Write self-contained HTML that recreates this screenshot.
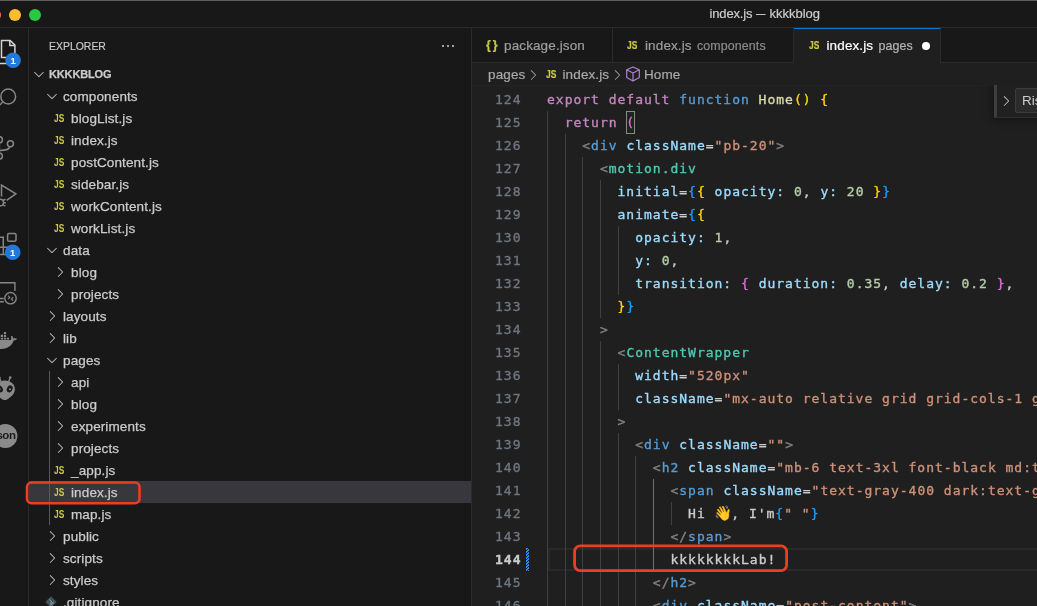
<!DOCTYPE html>
<html lang="en">
<head>
<meta charset="utf-8">
<title>index.js — kkkkblog</title>
<style>
*{box-sizing:border-box;margin:0;padding:0}
html,body{width:1037px;height:606px;overflow:hidden;background:#181818}
body{position:relative;will-change:transform;font-family:"Liberation Sans",sans-serif;color:#ccc;-webkit-font-smoothing:antialiased}
.abs{position:absolute}
/* window top edge */
#topedge{left:0;top:0;width:1037px;height:1px;background:#5d5d5d}
/* title bar */
#titlebar{left:0;top:0;width:1037px;height:28px;background:#181818;border-bottom:1px solid #2b2b2b}
#title{left:664px;top:6px;width:200px;height:16px;font-size:13px;line-height:16px;color:#cccccc;white-space:nowrap;letter-spacing:-0.15px;-webkit-text-stroke:0.2px currentColor}
.tl{width:12px;height:12px;border-radius:50%;top:9px}
/* activity bar */
#activity{left:0;top:28px;width:29px;height:578px;background:#181818;border-right:1px solid #2b2b2b;overflow:hidden}
/* sidebar */
#sidebar{left:29px;top:28px;width:443px;height:578px;background:#181818;border-right:1px solid #2b2b2b;overflow:hidden}
#exphead{left:20px;top:12px;font-size:11px;line-height:13px;color:#cccccc;white-space:nowrap;letter-spacing:0;transform:scaleX(0.95);transform-origin:0 0;-webkit-text-stroke:0.15px currentColor}
#dots{left:412px;top:16px}
.row{position:absolute;left:0;width:442px;height:22px;line-height:22px;font-size:13.5px;letter-spacing:0.12px;color:#cccccc;white-space:nowrap}
.row .lbl{position:absolute;top:1px;-webkit-text-stroke:0.25px currentColor}
.row .js{position:absolute;top:0.5px;font-size:10px;font-weight:bold;color:#cbcb41;letter-spacing:0;transform:scaleX(0.84);transform-origin:0 50%}
.row svg.chev{position:absolute;top:3px;width:16px;height:16px}
.row.sel{background:#37373d}
#root .lbl{font-size:11px;font-weight:bold;letter-spacing:-0.15px;top:0}
#guide{left:20px;top:343px;width:1px;height:154px;background:#585858}
.redbox{border:2.5px solid #ee4027;border-radius:5.5px;background:transparent}
/* editor */
#editor{left:472px;top:28px;width:565px;height:578px;background:#1f1f1f;overflow:hidden}
#tabs{left:0;top:0;width:565px;height:35px;background:#181818;border-bottom:1px solid #2b2b2b}
.tab{position:absolute;top:0;height:35px;border-right:1px solid #2b2b2b;font-size:13.5px;letter-spacing:0.12px;line-height:36px;color:#9d9d9d;white-space:nowrap}
.tab.active{background:#1f1f1f;border-top:1px solid #0078d4;color:#ffffff;height:36px;line-height:34px}
.tab span{position:absolute;top:0;-webkit-text-stroke:0.2px currentColor}
.tab .ic{font-weight:bold;color:#cbcb41}
.tab .desc{font-size:12.4px;color:#8b8b8b}
.jsi{font-size:10px;letter-spacing:0;transform:scaleX(0.84);transform-origin:0 50%}
.tab.active .desc{color:#b4b4b4}
#crumbs{left:0;top:36px;width:565px;height:22px;font-size:13.5px;letter-spacing:0.12px;line-height:22px;color:#a9a9a9;white-space:nowrap}
#crumbs span,#crumbs svg{position:absolute}
#crumbs span{-webkit-text-stroke:0.2px currentColor}
#code{left:0;top:59px;width:565px;height:520px;font-family:"DejaVu Sans Mono","Liberation Mono",monospace;font-size:13px;letter-spacing:0.99px;color:#cccccc;-webkit-text-stroke:0.35px currentColor}
.ln{position:absolute;left:0;height:23px;line-height:23px;white-space:pre;width:900px}
.ln .no{position:absolute;left:-0.5px;width:50px;text-align:right;color:#6e7681}
.ln .tx{position:absolute;left:75px}
.g{position:absolute;width:1px;background:#3a3a3a}
.emo{display:inline-block;width:16.7px;letter-spacing:0;font-size:14.5px;line-height:15px;text-align:center;vertical-align:-0.5px;-webkit-text-stroke:0;font-family:"Noto Color Emoji","DejaVu Sans",sans-serif}
.k{color:#c586c0}.b{color:#569cd6}.f{color:#dcdcaa}.y{color:#ffd700}.p{color:#da70d6}.u{color:#179fff}
.t{color:#808080}.c{color:#4ec9b0}.a{color:#9cdcfe}.s{color:#ce9178}.n{color:#b5cea8}.w{color:#cccccc}
</style>
</head>
<body>
<div id="titlebar" class="abs"></div>
<div id="topedge" class="abs"></div>
<div class="abs tl" style="left:-11px;background:#ff5f57"></div>
<div class="abs tl" style="left:9px;background:#febc2e"></div>
<div class="abs tl" style="left:29px;background:#28c840"></div>
<div id="title" class="abs"><span class="abs" style="left:45.5px;top:0">index.js</span><span class="abs" style="left:91.9px;top:0;transform:scaleX(0.72);transform-origin:0 50%">—</span><span class="abs" style="left:105.6px;top:0;letter-spacing:-0.02px">kkkkblog</span></div>

<div id="activity" class="abs">
<svg class="abs" style="left:0;top:0" width="29" height="578" viewBox="0 28 29 578" fill="none" stroke-linecap="butt" stroke-linejoin="miter">
<g stroke="#d4d4d4" stroke-width="1.5"><path d="M1.5 57.4V40.4H10.2L14.9 45.1V57.4Z"/><path d="M9.8 40.6V45.5H14.7"/><path d="M-5 46.4V63.4H9V57.4"/></g>
<circle cx="13.1" cy="60.2" r="7.8" fill="#2478d8"/>
<text x="13.1" y="63.6" text-anchor="middle" font-family="Liberation Sans, sans-serif" font-weight="bold" font-size="9.5" fill="#ffffff">1</text>
<g stroke="#868686" stroke-width="1.5"><circle cx="8.2" cy="96.5" r="7.4"/><path d="M3 101.8L-3 107.8"/></g>
<g stroke="#868686" stroke-width="1.5"><circle cx="10.4" cy="143.8" r="3"/><circle cx="-0.6" cy="139.8" r="3"/><circle cx="-0.6" cy="156.1" r="3"/><path d="M-0.6 142.8V153.1"/><path d="M9.8 146.7C9.2 150.2 4.8 150.4-0.6 150.4"/></g>
<g stroke="#868686" stroke-width="1.5"><path d="M1.5 196.5V185L15.9 193.9L6.6 200.4"/><circle cx="0.2" cy="202.6" r="3.3"/><path d="M3.2 200.5L5.4 199.2M3.5 202.8H5.8M3.2 204.9L5.4 206.2"/></g>
<g stroke="#868686" stroke-width="1.5"><rect x="7.6" y="233.4" width="8.4" height="7.8" rx="1.3"/><path d="M-3 237.3H3.3V254.5H-3M-3 247.3H8M3.3 254.5H8"/></g>
<circle cx="12.7" cy="252.2" r="7.8" fill="#2478d8"/>
<text x="12.7" y="255.6" text-anchor="middle" font-family="Liberation Sans, sans-serif" font-weight="bold" font-size="9.5" fill="#ffffff">1</text>
<g stroke="#868686" stroke-width="1.4"><path d="M-3 282.7H14.9V291"/><circle cx="10.5" cy="298.2" r="5.7"/><path d="M-3 298.5H3.8M-3 301.8H3.8"/><path stroke-width="1.1" d="M8 295.6L9.8 297.4L8 299.2M13.2 297.2L11.4 299L13.2 300.8"/></g>
<path fill="#8a8a8a" stroke="none" d="M3.9 331.9H6.1V334.1H3.9ZM0.7 334.8H3.0V337.1H0.7ZM3.9 334.8H6.1V337.1H3.9ZM-2.4 337.7H-0.2V339.5H-2.4ZM0.7 337.7H3.0V339.5H0.7ZM3.9 337.7H6.1V339.5H3.9ZM6.9 337.7H9.1V339.5H6.9ZM-6 340H10.9C11.4 339 11.4 337.5 10.9 336.3L12 335.8C12.8 336.5 13.2 337.6 13.3 338.5C14.6 338 16.2 338.2 17.1 338.8C16.5 340 15.2 340.4 13.6 340.5C12.5 344.5 8.5 349 1 349H-6Z"/>
<g stroke="none"><path fill="#8a8a8a" d="M4.8 380.6C10.5 380.6 14.9 384.4 14.9 389.3C14.9 394.3 9.6 398.3 6 399.9H3.6C0 398.3-5.3 394.3-5.3 389.3C-5.3 384.4-0.9 380.6 4.8 380.6Z"/><path stroke="#8a8a8a" stroke-width="1.3" fill="none" d="M8.7 381.5L10 378.2M0.9 381.5L-0.4 378.2"/><circle cx="10.2" cy="377.6" r="1.3" fill="#8a8a8a"/><circle cx="-0.6" cy="377.6" r="1.3" fill="#8a8a8a"/><ellipse cx="9.7" cy="388.9" rx="2.7" ry="3.6" transform="rotate(30 9.7 388.9)" fill="#181818"/><ellipse cx="-0.1" cy="388.9" rx="2.7" ry="3.6" transform="rotate(-30 -0.1 388.9)" fill="#181818"/><circle cx="10" cy="389.2" r="1" fill="#8a8a8a"/><circle cx="-0.4" cy="389.2" r="1" fill="#8a8a8a"/></g>
<circle cx="5.4" cy="436.1" r="12" fill="#8a8a8a"/>
<text x="4.6" y="439.4" text-anchor="middle" font-family="Liberation Sans, sans-serif" font-weight="bold" font-size="11.5" letter-spacing="-0.5" fill="#1b1b1b">json</text>
</svg>
</div>

<div id="sidebar" class="abs">
<div id="exphead" class="abs">EXPLORER</div>
<svg id="dots" class="abs" width="14" height="4" viewBox="0 0 14 4"><circle cx="2" cy="2" r="1.1" fill="#c5c5c5"/><circle cx="7" cy="2" r="1.1" fill="#c5c5c5"/><circle cx="12" cy="2" r="1.1" fill="#c5c5c5"/></svg>
<div class="row" id="root" style="top:35px"><svg class="chev" style="left:2px" viewBox="0 0 16 16"><path fill="#c5c5c5" d="M7.976 10.072l4.357-4.357.62.618L8.284 11h-.618L3 6.333l.619-.618 4.357 4.357z"/></svg><span class="lbl" style="left:20px">KKKKBLOG</span></div>
<div class="row" style="top:57px"><svg class="chev" style="left:15px" viewBox="0 0 16 16"><path fill="#c5c5c5" d="M7.976 10.072l4.357-4.357.62.618L8.284 11h-.618L3 6.333l.619-.618 4.357 4.357z"/></svg><span class="lbl" style="left:34px">components</span></div>
<div class="row" style="top:79px"><span class="js" style="left:24.5px">JS</span><span class="lbl" style="left:42px">blogList.js</span></div>
<div class="row" style="top:101px"><span class="js" style="left:24.5px">JS</span><span class="lbl" style="left:42px">index.js</span></div>
<div class="row" style="top:123px"><span class="js" style="left:24.5px">JS</span><span class="lbl" style="left:42px">postContent.js</span></div>
<div class="row" style="top:145px"><span class="js" style="left:24.5px">JS</span><span class="lbl" style="left:42px">sidebar.js</span></div>
<div class="row" style="top:167px"><span class="js" style="left:24.5px">JS</span><span class="lbl" style="left:42px">workContent.js</span></div>
<div class="row" style="top:189px"><span class="js" style="left:24.5px">JS</span><span class="lbl" style="left:42px">workList.js</span></div>
<div class="row" style="top:211px"><svg class="chev" style="left:15px" viewBox="0 0 16 16"><path fill="#c5c5c5" d="M7.976 10.072l4.357-4.357.62.618L8.284 11h-.618L3 6.333l.619-.618 4.357 4.357z"/></svg><span class="lbl" style="left:34px">data</span></div>
<div class="row" style="top:233px"><svg class="chev" style="left:23px" viewBox="0 0 16 16"><path fill="#c5c5c5" d="M10.072 8.024L5.715 3.667l.618-.62L11 7.716v.618L6.333 13l-.618-.619 4.357-4.357z"/></svg><span class="lbl" style="left:42px">blog</span></div>
<div class="row" style="top:255px"><svg class="chev" style="left:23px" viewBox="0 0 16 16"><path fill="#c5c5c5" d="M10.072 8.024L5.715 3.667l.618-.62L11 7.716v.618L6.333 13l-.618-.619 4.357-4.357z"/></svg><span class="lbl" style="left:42px">projects</span></div>
<div class="row" style="top:277px"><svg class="chev" style="left:15px" viewBox="0 0 16 16"><path fill="#c5c5c5" d="M10.072 8.024L5.715 3.667l.618-.62L11 7.716v.618L6.333 13l-.618-.619 4.357-4.357z"/></svg><span class="lbl" style="left:34px">layouts</span></div>
<div class="row" style="top:299px"><svg class="chev" style="left:15px" viewBox="0 0 16 16"><path fill="#c5c5c5" d="M10.072 8.024L5.715 3.667l.618-.62L11 7.716v.618L6.333 13l-.618-.619 4.357-4.357z"/></svg><span class="lbl" style="left:34px">lib</span></div>
<div class="row" style="top:321px"><svg class="chev" style="left:15px" viewBox="0 0 16 16"><path fill="#c5c5c5" d="M7.976 10.072l4.357-4.357.62.618L8.284 11h-.618L3 6.333l.619-.618 4.357 4.357z"/></svg><span class="lbl" style="left:34px">pages</span></div>
<div class="row" style="top:343px"><svg class="chev" style="left:23px" viewBox="0 0 16 16"><path fill="#c5c5c5" d="M10.072 8.024L5.715 3.667l.618-.62L11 7.716v.618L6.333 13l-.618-.619 4.357-4.357z"/></svg><span class="lbl" style="left:42px">api</span></div>
<div class="row" style="top:365px"><svg class="chev" style="left:23px" viewBox="0 0 16 16"><path fill="#c5c5c5" d="M10.072 8.024L5.715 3.667l.618-.62L11 7.716v.618L6.333 13l-.618-.619 4.357-4.357z"/></svg><span class="lbl" style="left:42px">blog</span></div>
<div class="row" style="top:387px"><svg class="chev" style="left:23px" viewBox="0 0 16 16"><path fill="#c5c5c5" d="M10.072 8.024L5.715 3.667l.618-.62L11 7.716v.618L6.333 13l-.618-.619 4.357-4.357z"/></svg><span class="lbl" style="left:42px">experiments</span></div>
<div class="row" style="top:409px"><svg class="chev" style="left:23px" viewBox="0 0 16 16"><path fill="#c5c5c5" d="M10.072 8.024L5.715 3.667l.618-.62L11 7.716v.618L6.333 13l-.618-.619 4.357-4.357z"/></svg><span class="lbl" style="left:42px">projects</span></div>
<div class="row" style="top:431px"><span class="js" style="left:24.5px">JS</span><span class="lbl" style="left:42px">_app.js</span></div>
<div class="row sel" style="top:453px"><span class="js" style="left:24.5px">JS</span><span class="lbl" style="left:42px">index.js</span></div>
<div class="row" style="top:475px"><span class="js" style="left:24.5px">JS</span><span class="lbl" style="left:42px">map.js</span></div>
<div class="row" style="top:497px"><svg class="chev" style="left:15px" viewBox="0 0 16 16"><path fill="#c5c5c5" d="M10.072 8.024L5.715 3.667l.618-.62L11 7.716v.618L6.333 13l-.618-.619 4.357-4.357z"/></svg><span class="lbl" style="left:34px">public</span></div>
<div class="row" style="top:519px"><svg class="chev" style="left:15px" viewBox="0 0 16 16"><path fill="#c5c5c5" d="M10.072 8.024L5.715 3.667l.618-.62L11 7.716v.618L6.333 13l-.618-.619 4.357-4.357z"/></svg><span class="lbl" style="left:34px">scripts</span></div>
<div class="row" style="top:541px"><svg class="chev" style="left:15px" viewBox="0 0 16 16"><path fill="#c5c5c5" d="M10.072 8.024L5.715 3.667l.618-.62L11 7.716v.618L6.333 13l-.618-.619 4.357-4.357z"/></svg><span class="lbl" style="left:34px">styles</span></div>
<div class="row" style="top:563px"><svg class="chev" style="left:13.5px;top:3px" viewBox="0 0 16 16"><path fill="#41535b" d="M8 2.3l5.7 5.7L8 13.7 2.3 8z"/><path fill="none" stroke="#8a9aa2" stroke-width="0.9" d="M6.2 5.2l3.6 3.6M8 7v3.4"/><circle cx="8" cy="10.4" r="0.9" fill="#8a9aa2"/><circle cx="9.9" cy="8.9" r="0.9" fill="#8a9aa2"/></svg><span class="lbl" style="left:34px">.gitignore</span></div>
<div id="guide" class="abs"></div>
</div>

<div id="editor" class="abs"><!--ES-->
<div id="tabs" class="abs"></div>
<div class="tab" style="left:0px;width:141px"><span class="ic" style="left:14px;font-size:12.5px;letter-spacing:1.8px;font-weight:bold;top:-1px">{}</span><span class="" style="left:32px;">package.json</span></div>
<div class="tab" style="left:141px;width:181px"><span class="ic jsi" style="left:14px;">JS</span><span class="" style="left:32px;">index.js</span><span class="desc" style="left:84px;">components</span></div>
<div class="tab active" style="left:322px;width:147px"><span class="ic jsi" style="left:15px;">JS</span><span class="" style="left:32.5px;">index.js</span><span class="desc" style="left:84.5px;">pages</span><div style="position:absolute;left:128px;top:12.5px;width:8px;height:8px;border-radius:50%;background:#fff"></div></div>
<div id="crumbs" class="abs"><span style="left:16px">pages</span><svg style="left:53px;top:3px" width="16" height="16" viewBox="0 0 16 16"><path fill="#a0a0a0" d="M10.072 8.024L5.715 3.667l.618-.62L11 7.716v.618L6.333 13l-.618-.619 4.357-4.357z"/></svg><span class="jsi" style="left:73.5px;font-weight:bold;color:#cbcb41">JS</span><span style="left:90.5px">index.js</span><svg style="left:137px;top:3px" width="16" height="16" viewBox="0 0 16 16"><path fill="#a0a0a0" d="M10.072 8.024L5.715 3.667l.618-.62L11 7.716v.618L6.333 13l-.618-.619 4.357-4.357z"/></svg><svg style="left:152.20000000000005px;top:0.8px" width="18" height="18" viewBox="0 0 16 16"><path fill="none" stroke="#b180d7" stroke-width="1.05" stroke-linejoin="round" d="M8 1.7l5.6 2.6v6.9L8 14.3 2.4 11.2V4.3zM2.4 4.3L8 7.2l5.6-2.9M8 7.2v7.1"/></svg><span style="left:172px">Home</span></div>
<div id="code" class="abs"><div class="abs" style="left:75.5px;top:461.0px;width:600px;height:22.5px;border:2px solid #292929;border-right:none"></div><div class="abs" style="left:54px;top:460.5px;width:3.4px;height:23.5px;background:repeating-linear-gradient(-45deg,#2a8cf0 0,#2a8cf0 1.1px,#1f1f1f 1.1px,#1f1f1f 2.1px)"></div><div class="abs" style="left:153.78px;top:23.5px;width:9.4px;height:23px;border:1px solid #888888;background:rgba(0,100,0,0.1)"></div><div class="g" style="left:75.0px;top:23.5px;height:23px;background:#404040"></div><div class="g" style="left:75.0px;top:46.5px;height:23px;background:#404040"></div><div class="g" style="left:92.6px;top:46.5px;height:23px;background:#404040"></div><div class="g" style="left:75.0px;top:69.5px;height:23px;background:#404040"></div><div class="g" style="left:92.6px;top:69.5px;height:23px;background:#404040"></div><div class="g" style="left:110.3px;top:69.5px;height:23px;background:#404040"></div><div class="g" style="left:75.0px;top:92.5px;height:23px;background:#404040"></div><div class="g" style="left:92.6px;top:92.5px;height:23px;background:#404040"></div><div class="g" style="left:110.3px;top:92.5px;height:23px;background:#404040"></div><div class="g" style="left:127.9px;top:92.5px;height:23px;background:#404040"></div><div class="g" style="left:75.0px;top:115.5px;height:23px;background:#404040"></div><div class="g" style="left:92.6px;top:115.5px;height:23px;background:#404040"></div><div class="g" style="left:110.3px;top:115.5px;height:23px;background:#404040"></div><div class="g" style="left:127.9px;top:115.5px;height:23px;background:#404040"></div><div class="g" style="left:75.0px;top:138.5px;height:23px;background:#404040"></div><div class="g" style="left:92.6px;top:138.5px;height:23px;background:#404040"></div><div class="g" style="left:110.3px;top:138.5px;height:23px;background:#404040"></div><div class="g" style="left:127.9px;top:138.5px;height:23px;background:#404040"></div><div class="g" style="left:145.6px;top:138.5px;height:23px;background:#404040"></div><div class="g" style="left:75.0px;top:161.5px;height:23px;background:#404040"></div><div class="g" style="left:92.6px;top:161.5px;height:23px;background:#404040"></div><div class="g" style="left:110.3px;top:161.5px;height:23px;background:#404040"></div><div class="g" style="left:127.9px;top:161.5px;height:23px;background:#404040"></div><div class="g" style="left:145.6px;top:161.5px;height:23px;background:#404040"></div><div class="g" style="left:75.0px;top:184.5px;height:23px;background:#404040"></div><div class="g" style="left:92.6px;top:184.5px;height:23px;background:#404040"></div><div class="g" style="left:110.3px;top:184.5px;height:23px;background:#404040"></div><div class="g" style="left:127.9px;top:184.5px;height:23px;background:#404040"></div><div class="g" style="left:145.6px;top:184.5px;height:23px;background:#404040"></div><div class="g" style="left:75.0px;top:207.5px;height:23px;background:#404040"></div><div class="g" style="left:92.6px;top:207.5px;height:23px;background:#404040"></div><div class="g" style="left:110.3px;top:207.5px;height:23px;background:#404040"></div><div class="g" style="left:127.9px;top:207.5px;height:23px;background:#404040"></div><div class="g" style="left:75.0px;top:230.5px;height:23px;background:#404040"></div><div class="g" style="left:92.6px;top:230.5px;height:23px;background:#404040"></div><div class="g" style="left:110.3px;top:230.5px;height:23px;background:#404040"></div><div class="g" style="left:75.0px;top:253.5px;height:23px;background:#404040"></div><div class="g" style="left:92.6px;top:253.5px;height:23px;background:#404040"></div><div class="g" style="left:110.3px;top:253.5px;height:23px;background:#404040"></div><div class="g" style="left:127.9px;top:253.5px;height:23px;background:#404040"></div><div class="g" style="left:75.0px;top:276.5px;height:23px;background:#404040"></div><div class="g" style="left:92.6px;top:276.5px;height:23px;background:#404040"></div><div class="g" style="left:110.3px;top:276.5px;height:23px;background:#404040"></div><div class="g" style="left:127.9px;top:276.5px;height:23px;background:#404040"></div><div class="g" style="left:145.6px;top:276.5px;height:23px;background:#404040"></div><div class="g" style="left:75.0px;top:299.5px;height:23px;background:#404040"></div><div class="g" style="left:92.6px;top:299.5px;height:23px;background:#404040"></div><div class="g" style="left:110.3px;top:299.5px;height:23px;background:#404040"></div><div class="g" style="left:127.9px;top:299.5px;height:23px;background:#404040"></div><div class="g" style="left:145.6px;top:299.5px;height:23px;background:#404040"></div><div class="g" style="left:75.0px;top:322.5px;height:23px;background:#404040"></div><div class="g" style="left:92.6px;top:322.5px;height:23px;background:#404040"></div><div class="g" style="left:110.3px;top:322.5px;height:23px;background:#404040"></div><div class="g" style="left:127.9px;top:322.5px;height:23px;background:#404040"></div><div class="g" style="left:75.0px;top:345.5px;height:23px;background:#404040"></div><div class="g" style="left:92.6px;top:345.5px;height:23px;background:#404040"></div><div class="g" style="left:110.3px;top:345.5px;height:23px;background:#404040"></div><div class="g" style="left:127.9px;top:345.5px;height:23px;background:#404040"></div><div class="g" style="left:145.6px;top:345.5px;height:23px;background:#404040"></div><div class="g" style="left:75.0px;top:368.5px;height:23px;background:#404040"></div><div class="g" style="left:92.6px;top:368.5px;height:23px;background:#404040"></div><div class="g" style="left:110.3px;top:368.5px;height:23px;background:#404040"></div><div class="g" style="left:127.9px;top:368.5px;height:23px;background:#404040"></div><div class="g" style="left:145.6px;top:368.5px;height:23px;background:#404040"></div><div class="g" style="left:163.2px;top:368.5px;height:23px;background:#404040"></div><div class="g" style="left:75.0px;top:391.5px;height:23px;background:#404040"></div><div class="g" style="left:92.6px;top:391.5px;height:23px;background:#404040"></div><div class="g" style="left:110.3px;top:391.5px;height:23px;background:#404040"></div><div class="g" style="left:127.9px;top:391.5px;height:23px;background:#404040"></div><div class="g" style="left:145.6px;top:391.5px;height:23px;background:#404040"></div><div class="g" style="left:163.2px;top:391.5px;height:23px;background:#404040"></div><div class="g" style="left:180.8px;top:391.5px;height:23px;background:#707070"></div><div class="g" style="left:75.0px;top:414.5px;height:23px;background:#404040"></div><div class="g" style="left:92.6px;top:414.5px;height:23px;background:#404040"></div><div class="g" style="left:110.3px;top:414.5px;height:23px;background:#404040"></div><div class="g" style="left:127.9px;top:414.5px;height:23px;background:#404040"></div><div class="g" style="left:145.6px;top:414.5px;height:23px;background:#404040"></div><div class="g" style="left:163.2px;top:414.5px;height:23px;background:#404040"></div><div class="g" style="left:180.8px;top:414.5px;height:23px;background:#707070"></div><div class="g" style="left:198.5px;top:414.5px;height:23px;background:#404040"></div><div class="g" style="left:75.0px;top:437.5px;height:23px;background:#404040"></div><div class="g" style="left:92.6px;top:437.5px;height:23px;background:#404040"></div><div class="g" style="left:110.3px;top:437.5px;height:23px;background:#404040"></div><div class="g" style="left:127.9px;top:437.5px;height:23px;background:#404040"></div><div class="g" style="left:145.6px;top:437.5px;height:23px;background:#404040"></div><div class="g" style="left:163.2px;top:437.5px;height:23px;background:#404040"></div><div class="g" style="left:180.8px;top:437.5px;height:23px;background:#707070"></div><div class="g" style="left:75.0px;top:460.5px;height:23px;background:#404040"></div><div class="g" style="left:92.6px;top:460.5px;height:23px;background:#404040"></div><div class="g" style="left:110.3px;top:460.5px;height:23px;background:#404040"></div><div class="g" style="left:127.9px;top:460.5px;height:23px;background:#404040"></div><div class="g" style="left:145.6px;top:460.5px;height:23px;background:#404040"></div><div class="g" style="left:163.2px;top:460.5px;height:23px;background:#404040"></div><div class="g" style="left:180.8px;top:460.5px;height:23px;background:#707070"></div><div class="g" style="left:75.0px;top:483.5px;height:23px;background:#404040"></div><div class="g" style="left:92.6px;top:483.5px;height:23px;background:#404040"></div><div class="g" style="left:110.3px;top:483.5px;height:23px;background:#404040"></div><div class="g" style="left:127.9px;top:483.5px;height:23px;background:#404040"></div><div class="g" style="left:145.6px;top:483.5px;height:23px;background:#404040"></div><div class="g" style="left:163.2px;top:483.5px;height:23px;background:#404040"></div><div class="g" style="left:75.0px;top:506.5px;height:23px;background:#404040"></div><div class="g" style="left:92.6px;top:506.5px;height:23px;background:#404040"></div><div class="g" style="left:110.3px;top:506.5px;height:23px;background:#404040"></div><div class="g" style="left:127.9px;top:506.5px;height:23px;background:#404040"></div><div class="g" style="left:145.6px;top:506.5px;height:23px;background:#404040"></div><div class="g" style="left:163.2px;top:506.5px;height:23px;background:#404040"></div><div class="ln" style="top:0.5px"><span class="no">124</span><span class="tx" style="left:75.00px"><span class="k">export default </span><span class="b">function </span><span class="f">Home</span><span class="y">() {</span></span></div><div class="ln" style="top:23.5px"><span class="no">125</span><span class="tx" style="left:92.64px"><span class="k">return </span><span class="p">(</span></span></div><div class="ln" style="top:46.5px"><span class="no">126</span><span class="tx" style="left:110.28px"><span class="t">&lt;</span><span class="b">div </span><span class="a">className</span><span class="w">=</span><span class="s">"pb-20"</span><span class="t">&gt;</span></span></div><div class="ln" style="top:69.5px"><span class="no">127</span><span class="tx" style="left:127.92px"><span class="t">&lt;</span><span class="c">motion.div</span></span></div><div class="ln" style="top:92.5px"><span class="no">128</span><span class="tx" style="left:145.56px"><span class="a">initial</span><span class="w">=</span><span class="u">{</span><span class="y">{ </span><span class="a">opacity</span><span class="a">: </span><span class="n">0</span><span class="w">, </span><span class="a">y</span><span class="a">: </span><span class="n">20 </span><span class="y">}</span><span class="u">}</span></span></div><div class="ln" style="top:115.5px"><span class="no">129</span><span class="tx" style="left:145.56px"><span class="a">animate</span><span class="w">=</span><span class="u">{</span><span class="y">{</span></span></div><div class="ln" style="top:138.5px"><span class="no">130</span><span class="tx" style="left:163.20px"><span class="a">opacity: </span><span class="n">1</span><span class="w">,</span></span></div><div class="ln" style="top:161.5px"><span class="no">131</span><span class="tx" style="left:163.20px"><span class="a">y: </span><span class="n">0</span><span class="w">,</span></span></div><div class="ln" style="top:184.5px"><span class="no">132</span><span class="tx" style="left:163.20px"><span class="a">transition: </span><span class="p">{ </span><span class="a">duration: </span><span class="n">0.35</span><span class="w">, </span><span class="a">delay: </span><span class="n">0.2 </span><span class="p">}</span><span class="w">,</span></span></div><div class="ln" style="top:207.5px"><span class="no">133</span><span class="tx" style="left:145.56px"><span class="y">}</span><span class="u">}</span></span></div><div class="ln" style="top:230.5px"><span class="no">134</span><span class="tx" style="left:127.92px"><span class="t">&gt;</span></span></div><div class="ln" style="top:253.5px"><span class="no">135</span><span class="tx" style="left:145.56px"><span class="t">&lt;</span><span class="c">ContentWrapper</span></span></div><div class="ln" style="top:276.5px"><span class="no">136</span><span class="tx" style="left:163.20px"><span class="a">width</span><span class="w">=</span><span class="s">"520px"</span></span></div><div class="ln" style="top:299.5px"><span class="no">137</span><span class="tx" style="left:163.20px"><span class="a">className</span><span class="w">=</span><span class="s">"mx-auto relative grid grid-cols-1 gap-4 md:grid-cols-2"</span></span></div><div class="ln" style="top:322.5px"><span class="no">138</span><span class="tx" style="left:145.56px"><span class="t">&gt;</span></span></div><div class="ln" style="top:345.5px"><span class="no">139</span><span class="tx" style="left:163.20px"><span class="t">&lt;</span><span class="b">div </span><span class="a">className</span><span class="w">=</span><span class="s">""</span><span class="t">&gt;</span></span></div><div class="ln" style="top:368.5px"><span class="no">140</span><span class="tx" style="left:180.84px"><span class="t">&lt;</span><span class="b">h2 </span><span class="a">className</span><span class="w">=</span><span class="s">"mb-6 text-3xl font-black md:text-5xl"</span><span class="t">&gt;</span></span></div><div class="ln" style="top:391.5px"><span class="no">141</span><span class="tx" style="left:198.48px"><span class="t">&lt;</span><span class="b">span </span><span class="a">className</span><span class="w">=</span><span class="s">"text-gray-400 dark:text-gray-500"</span><span class="t">&gt;</span></span></div><div class="ln" style="top:414.5px"><span class="no">142</span><span class="tx" style="left:216.12px"><span class="w">Hi </span><span class="emo">👋</span><span class="w">, I'm</span><span class="u">{</span><span class="s">" "</span><span class="u">}</span></span></div><div class="ln" style="top:437.5px"><span class="no">143</span><span class="tx" style="left:198.48px"><span class="t">&lt;/</span><span class="b">span</span><span class="t">&gt;</span></span></div><div class="ln" style="top:460.5px"><span class="no" style="color:#cccccc;font-weight:bold">144</span><span class="tx" style="left:198.48px"><span class="w">kkkkkkkkLab!</span></span></div><div class="ln" style="top:483.5px"><span class="no">145</span><span class="tx" style="left:180.84px"><span class="t">&lt;/</span><span class="b">h2</span><span class="t">&gt;</span></span></div><div class="ln" style="top:506.5px"><span class="no">146</span><span class="tx" style="left:180.84px"><span class="t">&lt;</span><span class="b">div </span><span class="a">className</span><span class="w">=</span><span class="s">"post-content"</span><span class="t">&gt;</span></span></div></div>
<div class="abs" style="left:0;top:57px;width:565px;height:1px;background:#232323"></div><div id="find" class="abs" style="left:522px;top:57px;width:60px;height:33px;background:#202020;border-left:3px solid #3d3d3d;border-bottom:1px solid #2f2f2f;box-shadow:0 0 8px 2px rgba(0,0,0,0.36);clip-path:inset(0 0 -12px -12px)"><svg class="abs" style="left:1px;top:8px" width="16" height="16" viewBox="0 0 16 16"><path fill="#c5c5c5" d="M10.072 8.024L5.715 3.667l.618-.62L11 7.716v.618L6.333 13l-.618-.619 4.357-4.357z"/></svg><div class="abs" style="left:18px;top:3px;width:60px;height:25px;background:#2b2b2b;border:1px solid #3c3c3c;border-radius:2px;font-size:13.5px;line-height:23px;padding-left:6px;color:#cccccc">Ris</div></div>
<!--EE--></div>
<svg id="anno" class="abs" style="left:0;top:0;pointer-events:none" width="1037" height="606" viewBox="0 0 1037 606" fill="none" stroke="#ee3e22"><rect x="27" y="482.5" width="112.5" height="20.8" rx="4.6" stroke-width="2.6"/><rect x="574.6" y="545.8" width="212" height="24.9" rx="5.6" stroke-width="2.8"/></svg>
</body>
</html>
